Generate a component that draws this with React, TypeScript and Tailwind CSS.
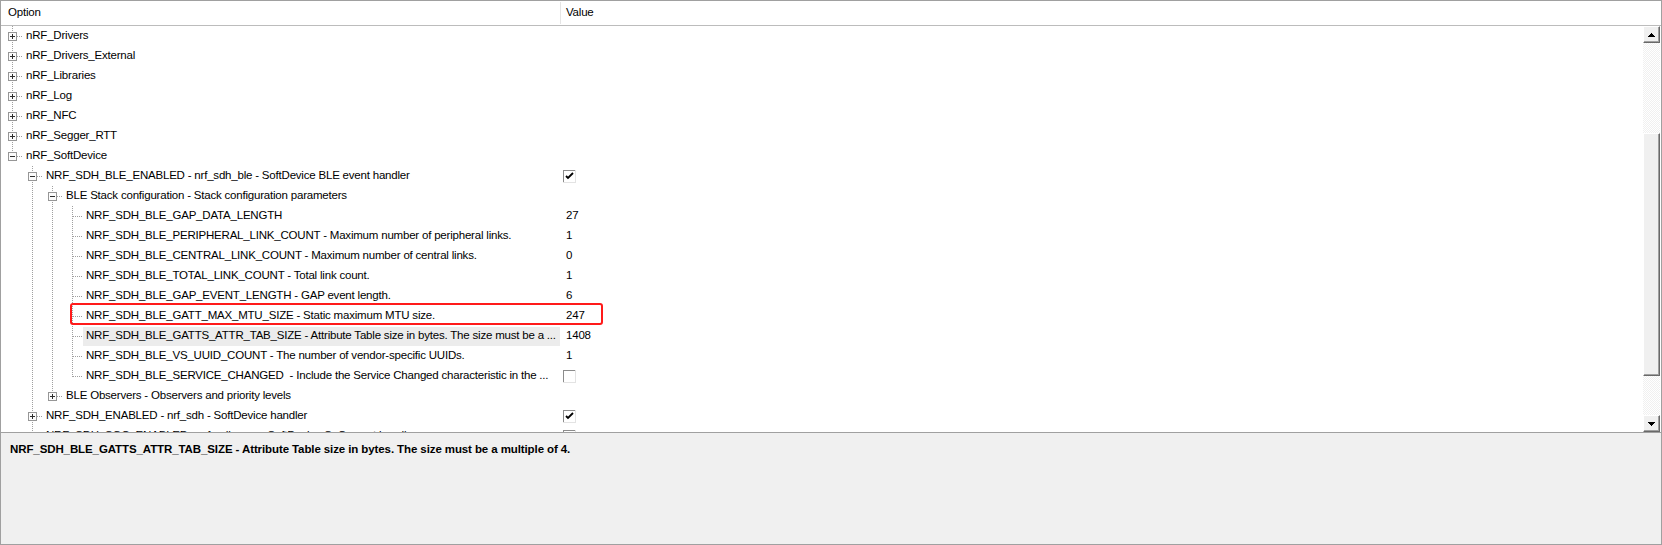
import React from "react";

type Value = { kind: "text"; text: string } | { kind: "check"; checked: boolean } | null;

interface TreeRow {
  label: string;
  level: number;
  box: "+" | "-" | null;
  guides: boolean[];
  last: boolean;
  value: Value;
  selected?: boolean;
  marked?: boolean;
}

const txt = (text: string): Value => ({ kind: "text", text });
const chk = (checked: boolean): Value => ({ kind: "check", checked });

const leafGuides = [false, true, true];

const rows: TreeRow[] = [
  { label: "nRF_Drivers", level: 0, box: "+", guides: [], last: false, value: null },
  { label: "nRF_Drivers_External", level: 0, box: "+", guides: [], last: false, value: null },
  { label: "nRF_Libraries", level: 0, box: "+", guides: [], last: false, value: null },
  { label: "nRF_Log", level: 0, box: "+", guides: [], last: false, value: null },
  { label: "nRF_NFC", level: 0, box: "+", guides: [], last: false, value: null },
  { label: "nRF_Segger_RTT", level: 0, box: "+", guides: [], last: false, value: null },
  { label: "nRF_SoftDevice", level: 0, box: "-", guides: [], last: true, value: null },
  {
    label: "NRF_SDH_BLE_ENABLED - nrf_sdh_ble - SoftDevice BLE event handler",
    level: 1,
    box: "-",
    guides: [false],
    last: false,
    value: chk(true),
  },
  {
    label: "BLE Stack configuration - Stack configuration parameters",
    level: 2,
    box: "-",
    guides: [false, true],
    last: false,
    value: null,
  },
  { label: "NRF_SDH_BLE_GAP_DATA_LENGTH", level: 3, box: null, guides: leafGuides, last: false, value: txt("27") },
  {
    label: "NRF_SDH_BLE_PERIPHERAL_LINK_COUNT - Maximum number of peripheral links.",
    level: 3,
    box: null,
    guides: leafGuides,
    last: false,
    value: txt("1"),
  },
  {
    label: "NRF_SDH_BLE_CENTRAL_LINK_COUNT - Maximum number of central links.",
    level: 3,
    box: null,
    guides: leafGuides,
    last: false,
    value: txt("0"),
  },
  {
    label: "NRF_SDH_BLE_TOTAL_LINK_COUNT - Total link count.",
    level: 3,
    box: null,
    guides: leafGuides,
    last: false,
    value: txt("1"),
  },
  {
    label: "NRF_SDH_BLE_GAP_EVENT_LENGTH - GAP event length.",
    level: 3,
    box: null,
    guides: leafGuides,
    last: false,
    value: txt("6"),
  },
  {
    label: "NRF_SDH_BLE_GATT_MAX_MTU_SIZE - Static maximum MTU size.",
    level: 3,
    box: null,
    guides: leafGuides,
    last: false,
    value: txt("247"),
    marked: true,
  },
  {
    label: "NRF_SDH_BLE_GATTS_ATTR_TAB_SIZE - Attribute Table size in bytes. The size must be a ...",
    level: 3,
    box: null,
    guides: leafGuides,
    last: false,
    value: txt("1408"),
    selected: true,
  },
  {
    label: "NRF_SDH_BLE_VS_UUID_COUNT - The number of vendor-specific UUIDs.",
    level: 3,
    box: null,
    guides: leafGuides,
    last: false,
    value: txt("1"),
  },
  {
    label: "NRF_SDH_BLE_SERVICE_CHANGED  - Include the Service Changed characteristic in the ...",
    level: 3,
    box: null,
    guides: leafGuides,
    last: true,
    value: chk(false),
  },
  {
    label: "BLE Observers - Observers and priority levels",
    level: 2,
    box: "+",
    guides: [false, true],
    last: true,
    value: null,
  },
  {
    label: "NRF_SDH_ENABLED - nrf_sdh - SoftDevice handler",
    level: 1,
    box: "+",
    guides: [false],
    last: false,
    value: chk(true),
  },
  {
    label: "NRF_SDH_SOC_ENABLED - nrf_sdh_soc - SoftDevice SoC event handler",
    level: 1,
    box: "+",
    guides: [false],
    last: false,
    value: chk(true),
  },
];

const LINE = "#a0a0a0";

// one 20px column of the tree's guide lines
const GuideCell: React.FC<{ mode: "none" | "through" | "own"; last?: boolean; box?: "+" | "-" | null }> = ({
  mode,
  last,
  box,
}) => (
  <svg width="20" height="20" className="shrink-0 block" shapeRendering="crispEdges">
    {mode === "through" && (
      <line x1="10.5" y1="0" x2="10.5" y2="20" stroke={LINE} strokeDasharray="1 1" />
    )}
    {mode === "own" && (
      <>
        <line x1="10.5" y1="0" x2="10.5" y2={last ? 11 : 20} stroke={LINE} strokeDasharray="1 1" />
        <line x1="11" y1="10.5" x2="20" y2="10.5" stroke={LINE} strokeDasharray="1 1" />
        {box && (
          <>
            <rect x="6.5" y="6.5" width="8" height="8" fill="#fbfbfb" stroke="#969696" />
            <line x1="8" y1="10.5" x2="13" y2="10.5" stroke="#2b2b2b" />
            {box === "+" && <line x1="10.5" y1="8" x2="10.5" y2="13" stroke="#2b2b2b" />}
          </>
        )}
      </>
    )}
  </svg>
);

const CheckBox: React.FC<{ checked: boolean }> = ({ checked }) => (
  <svg width="13" height="13" className="block" shapeRendering="crispEdges">
    <rect x="0" y="0" width="13" height="13" fill="#fff" />
    <line x1="0.5" y1="0" x2="0.5" y2="13" stroke="#8c8c8c" />
    <line x1="0" y1="0.5" x2="13" y2="0.5" stroke="#8c8c8c" />
    <line x1="12.5" y1="0" x2="12.5" y2="13" stroke="#e3e3e3" />
    <line x1="0" y1="12.5" x2="13" y2="12.5" stroke="#e3e3e3" />
    {checked && (
      <path d="M3 6 L5 8 L10 3" fill="none" stroke="#000" strokeWidth="1.8" shapeRendering="auto" />
    )}
  </svg>
);

const Arrow: React.FC<{ up?: boolean }> = ({ up }) => (
  <svg width="7" height="4" className="block" shapeRendering="crispEdges">
    <path d={up ? "M0 4 L3.5 0 L7 4 Z" : "M0 0 L7 0 L3.5 4 Z"} fill="#000" />
  </svg>
);

const ScrollButton: React.FC<{ up?: boolean }> = ({ up }) => (
  <div className="h-[17px] flex items-center justify-center bg-[#f0f0f0] border border-t-white border-l-white border-r-[#696969] border-b-[#696969] shadow-[inset_-1px_-1px_0_#a0a0a0]">
    <Arrow up={up} />
  </div>
);

const Row: React.FC<{ row: TreeRow }> = ({ row }) => {
  const cells: React.ReactNode[] = [];
  for (let i = 0; i < row.level; i++) {
    cells.push(<GuideCell key={i} mode={row.guides[i] ? "through" : "none"} />);
  }
  cells.push(<GuideCell key="own" mode="own" last={row.last} box={row.box} />);

  return (
    <div className="relative flex h-[20px] items-center">
      <div className="flex w-[559px] shrink-0 items-center pl-px">
        {cells}
        <div
          className={`ml-px flex h-[19px] flex-1 items-center overflow-hidden whitespace-pre pl-[3px] ${
            row.selected ? "bg-[#ececec]" : ""
          }`}
        >
          {row.label}
        </div>
      </div>
      <div className="flex flex-1 items-center">
        {row.value?.kind === "text" && <span className="pl-[6px]">{row.value.text}</span>}
        {row.value?.kind === "check" && (
          <span className="pl-[3px]">
            <CheckBox checked={row.value.checked} />
          </span>
        )}
      </div>
      {row.marked && (
        <div className="pointer-events-none absolute left-[69px] top-[-3px] h-[22px] w-[533px] rounded-[3px] border-2 border-[#ff1a1a]" />
      )}
    </div>
  );
};

export default function App() {
  return (
    <div
      className="flex h-[545px] w-[1662px] flex-col overflow-hidden border border-[#a0a0a0] bg-white text-[11.5px] tracking-[-0.2px] text-black"
      style={{ fontFamily: '"Liberation Sans", Arial, sans-serif' }}
    >
      {/* column headers */}
      <div className="flex h-[25px] shrink-0 border-b border-[#bcbcbc]">
        <div className="flex w-[559px] items-center pl-[7px]">Option</div>
        <div className="my-[1px] w-px bg-[#e5e5e5]" />
        <div className="flex flex-1 items-center pl-[5px]">Value</div>
      </div>

      {/* tree + scrollbar */}
      <div className="flex h-[406px] shrink-0">
        <div className="flex-1 overflow-hidden">
          {rows.map((row, i) => (
            <Row key={i} row={row} />
          ))}
        </div>
        <div className="mr-px flex w-[17px] flex-col">
          <ScrollButton up />
          <div className="h-[90px] bg-[repeating-conic-gradient(#f0f0f0_0_25%,#ffffff_0_50%)] bg-[length:2px_2px]" />
          <div className="h-[243px] bg-[#f0f0f0] border border-t-white border-l-white border-r-[#696969] border-b-[#696969] shadow-[inset_-1px_-1px_0_#a0a0a0]" />
          <div className="flex-1 bg-[repeating-conic-gradient(#f0f0f0_0_25%,#ffffff_0_50%)] bg-[length:2px_2px]" />
          <ScrollButton />
        </div>
      </div>

      {/* description panel */}
      <div className="flex-1 border-t border-[#a0a0a0] bg-[#f0f0f0] px-[9px] pt-[8px] font-bold tracking-[-0.1px]">
        NRF_SDH_BLE_GATTS_ATTR_TAB_SIZE - Attribute Table size in bytes. The size must be a multiple of 4.
      </div>
    </div>
  );
}
